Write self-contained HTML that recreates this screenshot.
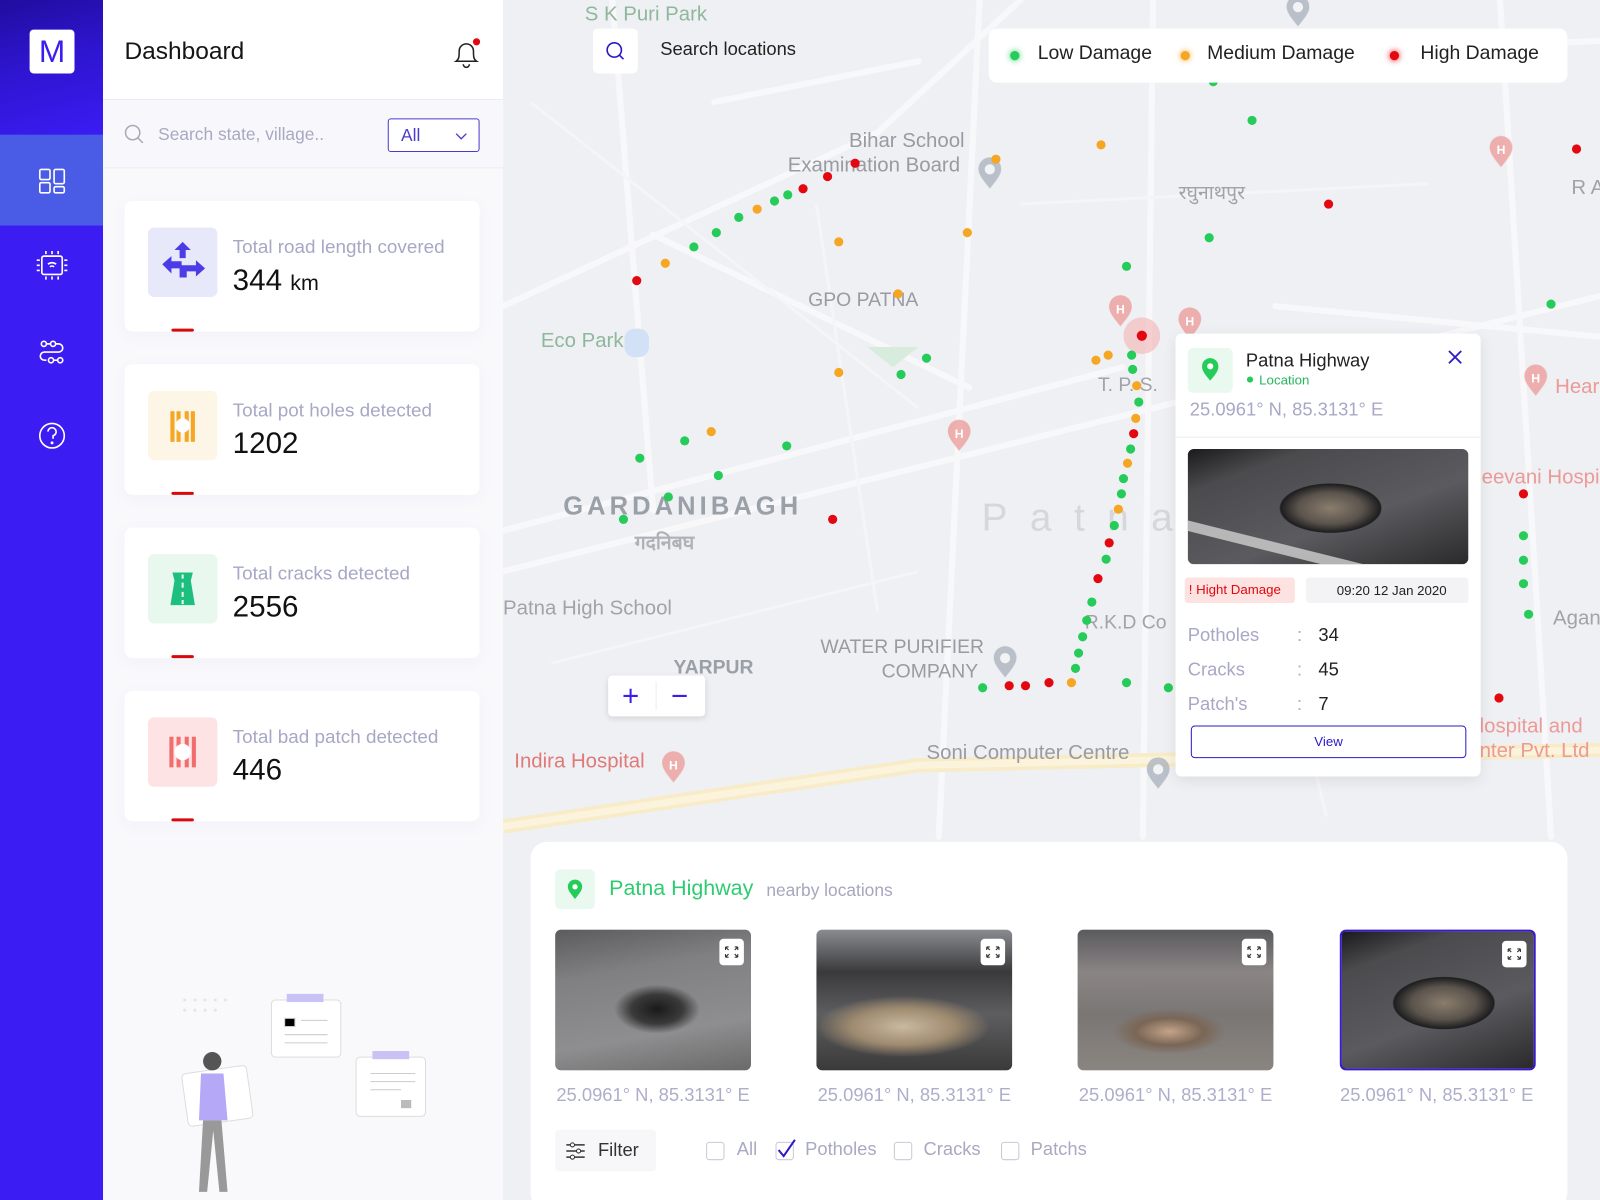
<!DOCTYPE html>
<html><head><meta charset="utf-8"><style>
*{box-sizing:border-box;margin:0;padding:0}
body{width:1600px;height:1200px;overflow:hidden;font-family:"Liberation Sans","Noto Sans CJK SC",sans-serif;background:#eff0f4}
#w{position:absolute;left:0;top:0;width:1568px;height:1176px;transform:scale(1.020408);transform-origin:0 0;overflow:hidden}
.a{position:absolute}
.side{left:0;top:0;width:101px;height:1176px;background:#3b1cf3}
.panel{left:101px;top:0;width:392px;height:1176px;background:#f9f9fc}
.card{left:21px;width:348px;height:128px;background:#fff;border-radius:8px;box-shadow:0 4px 14px rgba(120,120,180,.06)}
.ib{left:23px;top:26px;width:68px;height:68px;border-radius:6px}
.ct{left:106px;top:34px;font-size:18.5px;color:#a7a7c6;white-space:nowrap}
.cv{left:106px;top:62px;font-size:29px;color:#111}
.rb{left:46px;top:125px;width:22px;height:3px;background:#d60a0a;border-radius:2px}
.dot{display:inline-block;width:9px;height:9px;border-radius:50%}
.th{position:absolute;top:911px;width:192px;height:138px;border-radius:6px;overflow:hidden}
.ex{position:absolute;right:7px;top:9px;width:24px;height:26px;background:#fff;border-radius:4px}
.co{position:absolute;top:1063px;width:200px;text-align:center;font-size:18px;color:#aeaecb}
.cb{position:absolute;top:1119px;width:18px;height:18px;border:1.5px solid #c9c9d6;border-radius:3px}
.cl{position:absolute;top:1116px;font-size:18px;color:#a9a9c4}
</style></head><body><div id="w">

<svg width="0" height="0" style="position:absolute"><defs>
<symbol id="ex" viewBox="0 0 24 26"><path d="M6 8l3 3M6 8h3M6 8v3M18 8l-3 3M18 8h-3M18 8v3M6 18l3-3M6 18h3M6 18v-3M18 18l-3-3M18 18h-3M18 18v-3" stroke="#333" stroke-width="1.1" fill="none"/></symbol>
<symbol id="pin" viewBox="0 0 28 36"><path d="M14 34C6 24 2 19 2 13a12 12 0 0 1 24 0c0 6-4 11-12 21z"/></symbol>
</defs></svg>

<!-- MAP -->
<svg class="a" style="left:0;top:0" width="1568" height="1176" viewBox="0 0 1568 1176">
<rect width="1568" height="1176" fill="#eff0f3"/>
<g stroke="#f8f8fa" stroke-width="6" fill="none" stroke-linecap="round">
<path d="M493 560 L1568 290"/><path d="M493 520 L1100 360"/><path d="M640 230 L950 380"/>
<path d="M600 0 L640 500"/><path d="M1130 0 L1120 820"/><path d="M960 0 L920 820"/>
<path d="M1180 60 L1568 40"/><path d="M1470 0 L1520 820"/><path d="M493 300 L860 130 L1000 0"/>
<path d="M700 100 L900 60"/><path d="M1250 300 L1568 330"/>
</g>
<g stroke="#f5f5f8" stroke-width="3" fill="none">
<path d="M520 100 L900 400"/><path d="M800 200 L860 600"/><path d="M1200 400 L1300 800"/><path d="M540 650 L900 560"/><path d="M1000 200 L1400 180"/>
</g>
<path d="M493 810 L900 750 L1568 735" stroke="#f7ebc8" stroke-width="14" fill="none"/>
<path d="M493 810 L900 750 L1568 735" stroke="#fbf3dc" stroke-width="7" fill="none"/>
<path d="M850 340 L875 360 L900 340" fill="#d8ecdd"/>
<rect x="612" y="322" width="24" height="28" rx="10" fill="#d2e1f5"/>
<g font-family="Liberation Sans,sans-serif">
<text x="573" y="20" font-size="20" fill="#8fb79c">S K Puri Park</text>
<text x="530" y="340" font-size="20" fill="#8fb79c">Eco Park</text>
<text x="832" y="144" font-size="20" fill="#9a9aa2">Bihar School</text>
<text x="772" y="168" font-size="20" fill="#9a9aa2">Examination Board</text>
<text x="792" y="300" font-size="19" fill="#9a9aa2">GPO PATNA</text>
<text x="552" y="504" font-size="25" fill="#9aa0a8" font-weight="bold" letter-spacing="4">GARDANIBAGH</text>
<text x="962" y="520" font-size="38" fill="#d6d7dc" letter-spacing="22">Patna</text>
<text x="493" y="602" font-size="20" fill="#a2a2aa">Patna High School</text>
<text x="660" y="660" font-size="19" fill="#9aa0a8" font-weight="bold">YARPUR</text>
<text x="804" y="640" font-size="19" fill="#9a9aa2">WATER PURIFIER</text>
<text x="864" y="664" font-size="19" fill="#9a9aa2">COMPANY</text>
<text x="504" y="752" font-size="20" fill="#e07a78">Indira Hospital</text>
<text x="908" y="744" font-size="20" fill="#9a9aa2">Soni Computer Centre</text>
<text x="1452" y="474" font-size="20" fill="#ec9a97">eevani Hospi</text>
<text x="1450" y="718" font-size="20" fill="#ec9a97">lospital and</text>
<text x="1450" y="742" font-size="20" fill="#ec9a97">nter Pvt. Ltd</text>
<text x="1522" y="612" font-size="20" fill="#a2a2aa">Agan</text>
<text x="1524" y="385" font-size="20" fill="#ec9a97">Hear</text>
<text x="1540" y="190" font-size="20" fill="#a2a2aa">R A</text>
<text x="1063" y="616" font-size="19" fill="#a2a2aa">R.K.D Co</text>
<text x="1076" y="383" font-size="19" fill="#a2a2aa">T. P. S.</text>
<text x="1155" y="195" font-size="19" fill="#a2a2aa">रघुनाथपुर</text>
<text x="622" y="538" font-size="19" fill="#b0b0b8" font-weight="bold">गदनिबघ</text>
</g>
<g fill="#ec9a97" opacity=".75"><use href="#pin" x="1085" y="288" width="26" height="34"/><use href="#pin" x="1153" y="300" width="26" height="34"/><use href="#pin" x="927" y="410" width="26" height="34"/><use href="#pin" x="647" y="735" width="26" height="34"/><use href="#pin" x="1492" y="356" width="26" height="34"/><use href="#pin" x="1458" y="132" width="26" height="34"/></g>
<g fill="#a9b0bb" opacity=".75"><use href="#pin" x="972" y="632" width="26" height="34"/><use href="#pin" x="1122" y="741" width="26" height="34"/><use href="#pin" x="957" y="153" width="26" height="34"/><use href="#pin" x="1259" y="-6" width="26" height="34"/></g>
<g fill="#fff" font-size="12" font-weight="bold" font-family="Liberation Sans,sans-serif" text-anchor="middle"><text x="1098" y="307">H</text><text x="1166" y="319">H</text><text x="940" y="429">H</text><text x="660" y="754">H</text><text x="1505" y="375">H</text><text x="1471" y="151">H</text></g>
<g fill="#fff" opacity=".8"><circle cx="985" cy="645" r="5"/><circle cx="1135" cy="754" r="5"/><circle cx="970" cy="166" r="5"/><circle cx="1272" cy="7" r="5"/></g>
<circle cx="1119" cy="329" r="18" fill="#f3b4b4" opacity=".6"/>
<g fill="#25cc5a">
<circle cx="1189" cy="80" r="4.5"/><circle cx="1227" cy="118" r="4.5"/><circle cx="772" cy="191" r="4.5"/><circle cx="759" cy="197" r="4.5"/><circle cx="724" cy="213" r="4.5"/><circle cx="702" cy="228" r="4.5"/><circle cx="1185" cy="233" r="4.5"/><circle cx="680" cy="242" r="4.5"/><circle cx="1104" cy="261" r="4.5"/><circle cx="1520" cy="298" r="4.5"/><circle cx="1109" cy="348" r="4.5"/><circle cx="908" cy="351" r="4.5"/><circle cx="1110" cy="362" r="4.5"/><circle cx="883" cy="367" r="4.5"/><circle cx="1116" cy="394" r="4.5"/><circle cx="671" cy="432" r="4.5"/><circle cx="627" cy="449" r="4.5"/><circle cx="1108" cy="440" r="4.5"/><circle cx="771" cy="437" r="4.5"/><circle cx="1101" cy="469" r="4.5"/><circle cx="704" cy="466" r="4.5"/><circle cx="1099" cy="484" r="4.5"/><circle cx="655" cy="487" r="4.5"/><circle cx="1092" cy="515" r="4.5"/><circle cx="611" cy="509" r="4.5"/><circle cx="1084" cy="548" r="4.5"/><circle cx="1070" cy="590" r="4.5"/><circle cx="1065" cy="608" r="4.5"/><circle cx="1061" cy="624" r="4.5"/><circle cx="1057" cy="640" r="4.5"/><circle cx="1054" cy="655" r="4.5"/><circle cx="1104" cy="669" r="4.5"/><circle cx="1145" cy="674" r="4.5"/><circle cx="963" cy="674" r="4.5"/><circle cx="1493" cy="525" r="4.5"/><circle cx="1493" cy="549" r="4.5"/><circle cx="1493" cy="572" r="4.5"/><circle cx="1498" cy="602" r="4.5"/>
</g>
<g fill="#f5a623">
<circle cx="1079" cy="142" r="4.5"/><circle cx="976" cy="156" r="4.5"/><circle cx="742" cy="205" r="4.5"/><circle cx="948" cy="228" r="4.5"/><circle cx="822" cy="237" r="4.5"/><circle cx="652" cy="258" r="4.5"/><circle cx="880" cy="288" r="4.5"/><circle cx="1086" cy="348" r="4.5"/><circle cx="1074" cy="353" r="4.5"/><circle cx="1114" cy="378" r="4.5"/><circle cx="822" cy="365" r="4.5"/><circle cx="1113" cy="410" r="4.5"/><circle cx="697" cy="423" r="4.5"/><circle cx="1105" cy="454" r="4.5"/><circle cx="1096" cy="499" r="4.5"/><circle cx="1050" cy="669" r="4.5"/>
</g>
<g fill="#e3070f">
<circle cx="1545" cy="146" r="4.5"/><circle cx="838" cy="160" r="4.5"/><circle cx="811" cy="173" r="4.5"/><circle cx="787" cy="185" r="4.5"/><circle cx="1302" cy="200" r="4.5"/><circle cx="624" cy="275" r="4.5"/><circle cx="1119" cy="329" r="5"/><circle cx="1111" cy="425" r="4.5"/><circle cx="816" cy="509" r="4.5"/><circle cx="1087" cy="532" r="4.5"/><circle cx="1076" cy="567" r="4.5"/><circle cx="989" cy="672" r="4.5"/><circle cx="1005" cy="672" r="4.5"/><circle cx="1028" cy="669" r="4.5"/><circle cx="1493" cy="484" r="4.5"/><circle cx="1469" cy="684" r="4.5"/>
</g>
</svg>

<!-- map search -->
<div class="a" style="left:581px;top:28px;width:44px;height:44px;background:#fff;border-radius:5px">
<svg width="44" height="44"><circle cx="21" cy="21" r="7" fill="none" stroke="#2a1ac8" stroke-width="1.6"/><path d="M26 26 L30 30" stroke="#2a1ac8" stroke-width="1.6"/></svg></div>
<div class="a" style="left:647px;top:38px;font-size:18px;color:#222">Search locations</div>
<!-- legend -->
<div class="a" style="left:969px;top:28px;width:567px;height:53px;background:#fff;border-radius:8px;font-size:19px;color:#222">
<span class="dot a" style="left:21px;top:22px;background:#25cc5a;box-shadow:0 0 6px #25cc5a"></span><span class="a" style="left:48px;top:14px">Low Damage</span>
<span class="dot a" style="left:188px;top:22px;background:#f5a623;box-shadow:0 0 6px #f5a623"></span><span class="a" style="left:214px;top:14px">Medium Damage</span>
<span class="dot a" style="left:393px;top:22px;background:#e3070f;box-shadow:0 0 6px #e3070f"></span><span class="a" style="left:423px;top:14px">High Damage</span>
</div>
<!-- zoom ctrl -->
<div class="a" style="left:596px;top:662px;width:95px;height:40px;background:#fff;border-radius:4px;box-shadow:0 2px 6px rgba(0,0,0,.12)">
<svg width="95" height="40"><path d="M15 20h14M22 13v14M63 20h14" stroke="#3a1ef0" stroke-width="2"/><path d="M47 6v28" stroke="#eee"/></svg></div>

<!-- popup -->
<div class="a" style="left:1152px;top:327px;width:299px;height:434px;background:#fff;border-radius:6px;box-shadow:0 4px 14px rgba(0,0,0,.08)">
<div class="a" style="left:12px;top:14px;width:44px;height:44px;background:#e9f9ef;border-radius:5px"><svg width="44" height="44"><path d="M22 32c-6-7-8-10-8-14a8 8 0 0 1 16 0c0 4-2 7-8 14z" fill="#25cc5a"/><circle cx="22" cy="18" r="3" fill="#fff"/></svg></div>
<div class="a" style="left:69px;top:16px;font-size:18px;color:#222">Patna Highway</div>
<div class="a" style="left:70px;top:38px;font-size:13px;color:#25b85a"><span class="dot" style="width:6px;height:6px;background:#25cc5a;margin-right:6px;vertical-align:2px"></span>Location</div>
<div class="a" style="right:16px;top:14px"><svg width="18" height="18"><path d="M3 3L15 15M15 3L3 15" stroke="#2a1ac8" stroke-width="1.8"/></svg></div>
<div class="a" style="left:14px;top:64px;font-size:18px;color:#a8a8c6">25.0961° N, 85.3131° E</div>
<div class="a" style="left:0;top:101px;width:299px;height:1px;background:#ececf2"></div>
<div class="a" style="left:12px;top:113px;width:275px;height:113px;border-radius:6px;overflow:hidden;background:radial-gradient(ellipse 70px 34px at 140px 58px,#8a7d6c 0,#5b544d 45%,#1d1d1f 70%,transparent 72%),linear-gradient(160deg,#1a1a1c 0,#4b4b4e 20%,#5b5b5f 60%,#2a2a2c 100%)"><div class="a" style="left:0;top:70px;width:300px;height:10px;background:#cfcfcf;transform:rotate(14deg);transform-origin:0 0;opacity:.8"></div></div>
<div class="a" style="left:9px;top:239px;width:108px;height:25px;background:#fde2e2;border-radius:3px;font-size:13px;color:#e3070f;padding:4px 4px">! Hight Damage</div>
<div class="a" style="left:128px;top:239px;width:159px;height:25px;background:#f3f3f5;border-radius:3px;font-size:13px;color:#222;padding:5px 0 0 30px">09:20 12 Jan 2020</div>
<div class="a" style="left:12px;top:278px;font-size:18px;color:#a8a8c6;line-height:34px">Potholes<br>Cracks<br>Patch's</div>
<div class="a" style="left:119px;top:278px;font-size:18px;color:#a8a8c6;line-height:34px">:<br>:<br>:</div>
<div class="a" style="left:140px;top:278px;font-size:18px;color:#222;line-height:34px">34<br>45<br>7</div>
<div class="a" style="left:15px;top:384px;width:270px;height:32px;border:1.5px solid #2a1ac8;border-radius:4px;text-align:center;font-size:13px;color:#2a1ac8;line-height:29px">View</div>
</div>

<!-- bottom panel -->
<div class="a" style="left:520px;top:825px;width:1016px;height:360px;background:#fff;border-radius:16px"></div>
<div class="a" style="left:544px;top:852px;width:39px;height:39px;background:#e9f9ef;border-radius:5px"><svg width="39" height="39"><path d="M19.5 29c-5-6-7-9-7-12a7 7 0 0 1 14 0c0 3-2 6-7 12z" fill="#25cc5a"/><circle cx="19.5" cy="17" r="2.6" fill="#fff"/></svg></div>
<div class="a" style="left:597px;top:859px;font-size:21px;color:#2ecc71">Patna Highway</div>
<div class="a" style="left:751px;top:863px;font-size:17px;color:#a6a6bd">nearby locations</div>

<div class="th" style="left:544px;background:radial-gradient(ellipse 42px 24px at 100px 78px,#1a1a1a 0,#3a3a3a 60%,transparent 100%),linear-gradient(170deg,#5c5c5e 0,#808083 30%,#8e8e90 70%,#6a6a6a 100%)"><svg class="ex" viewBox="0 0 24 26"><use href="#ex"/></svg></div>
<div class="th" style="left:800px;background:radial-gradient(ellipse 85px 30px at 85px 95px,#c9b9a0 0,#9e8a6f 60%,transparent 100%),linear-gradient(180deg,#8a8c90 0,#3a3a3c 30%,#5e5e60 60%,#3a3a3a 100%)"><svg class="ex" viewBox="0 0 24 26"><use href="#ex"/></svg></div>
<div class="th" style="left:1056px;background:radial-gradient(ellipse 55px 22px at 90px 100px,#c4a48a 0,#7a6655 60%,transparent 100%),linear-gradient(180deg,#5a5a5e 0,#8a8584 30%,#7a7674 60%,#8a8580 100%)"><svg class="ex" viewBox="0 0 24 26"><use href="#ex"/></svg></div>
<div class="th" style="left:1313px;border:2px solid #3a1ac8;background:radial-gradient(ellipse 70px 36px at 100px 70px,#8a7d6c 0,#5b544d 45%,#1d1d1f 70%,transparent 72%),linear-gradient(160deg,#1a1a1c 0,#4b4b4e 20%,#5b5b5f 60%,#2a2a2c 100%)"><svg class="ex" viewBox="0 0 24 26"><use href="#ex"/></svg></div>
<div class="co" style="left:540px">25.0961° N, 85.3131° E</div>
<div class="co" style="left:796px">25.0961° N, 85.3131° E</div>
<div class="co" style="left:1052px">25.0961° N, 85.3131° E</div>
<div class="co" style="left:1308px">25.0961° N, 85.3131° E</div>

<div class="a" style="left:544px;top:1107px;width:99px;height:41px;background:#f7f7f9;border-radius:4px">
<svg class="a" style="left:10px;top:11px" width="20" height="20"><path d="M1 4h18M1 10h18M1 16h18" stroke="#333" stroke-width="1.4"/><circle cx="7" cy="4" r="2" fill="#fff" stroke="#333"/><circle cx="13" cy="10" r="2" fill="#fff" stroke="#333"/><circle cx="7" cy="16" r="2" fill="#fff" stroke="#333"/></svg>
<span class="a" style="left:42px;top:10px;font-size:18px;color:#333">Filter</span></div>
<div class="cb" style="left:692px"></div><div class="cl" style="left:722px">All</div>
<div class="cb" style="left:760px"></div><svg class="a" style="left:760px;top:1113px" width="22" height="24"><path d="M3 14l5 6L19 4" stroke="#2a1ac8" stroke-width="2" fill="none"/></svg><div class="cl" style="left:789px">Potholes</div>
<div class="cb" style="left:876px"></div><div class="cl" style="left:905px">Cracks</div>
<div class="cb" style="left:981px"></div><div class="cl" style="left:1010px">Patchs</div>

<!-- sidebar -->
<div class="a side">
<div class="a" style="left:0;top:0;width:101px;height:132px;background:linear-gradient(165deg,#200d9e 0,#2e15cf 45%,#3b1cf3 100%)"></div>
<div class="a" style="left:29px;top:29px;width:44px;height:43px;background:#fff;border-radius:4px;text-align:center;font-size:31px;line-height:43px;color:#3a1ef0">M</div>
<div class="a" style="left:0;top:132px;width:101px;height:89px;background:#4a5be6"></div>
<svg class="a" style="left:0;top:132px" width="101" height="400" fill="none" stroke="#fff" stroke-width="1.6">
<rect x="39" y="34" width="10" height="10" rx="1.5"/><rect x="53" y="34" width="10" height="14" rx="1.5"/><rect x="39" y="47" width="10" height="10" rx="1.5"/><rect x="53" y="51" width="10" height="6" rx="1.5"/>
<rect x="41" y="119" width="20" height="18" rx="2"/><path d="M39 123h-3M39 128h-3M39 133h-3M63 123h3M63 128h3M63 133h3M45 117v-3M51 117v-3M57 117v-3M45 139v3M51 139v3M57 139v3"/><path d="M47 127a6 6 0 0 1 8 0M49 129.5a3 3 0 0 1 4 0"/>
<circle cx="43" cy="205" r="2.5"/><circle cx="52" cy="205" r="2.5"/><path d="M45.5 205h4M54.5 205h3a4 4 0 0 1 0 8h-14a4 4 0 0 0 0 8h2"/><circle cx="50" cy="221" r="2.5"/><circle cx="59" cy="221" r="2.5"/><path d="M52.5 221h4"/>
<circle cx="51" cy="295" r="12"/><path d="M47 291a4 4 0 1 1 5 4v3"/><circle cx="51" cy="302" r=".6" fill="#fff"/>
</svg>
</div>

<!-- left panel -->
<div class="a panel">
<div class="a" style="left:0;top:0;width:392px;height:98px;background:#fff;border-bottom:1px solid #ececf3"></div>
<div class="a" style="left:21px;top:37px;font-size:24px;color:#151515">Dashboard</div>
<svg class="a" style="left:338px;top:34px" width="36" height="36" fill="none" stroke="#222" stroke-width="1.5"><path d="M8 26c3-2 3-5 3-10a7 7 0 0 1 14 0c0 5 0 8 3 10z"/><path d="M15 29a3 3 0 0 0 6 0"/><circle cx="28" cy="7" r="3.5" fill="#e3070f" stroke="none"/></svg>
<div class="a" style="left:0;top:98px;width:392px;height:67px;background:#f8f8fc;border-bottom:1px solid #ececf3"></div>
<svg class="a" style="left:20px;top:121px" width="22" height="22" fill="none" stroke="#a8a8bb" stroke-width="1.5"><circle cx="9" cy="9" r="7"/><path d="M14 14l5 5"/></svg>
<div class="a" style="left:54px;top:122px;font-size:17px;color:#a8a8c0">Search state, village..</div>
<div class="a" style="left:279px;top:116px;width:90px;height:33px;border:1.5px solid #4a3bd0;border-radius:3px;background:#fff;font-size:17px;color:#4a3bd0;padding:6px 0 0 12px">All<svg class="a" style="left:64px;top:10px" width="14" height="12"><path d="M2 4l5 5 5-5" stroke="#4a3bd0" fill="none" stroke-width="1.3"/></svg></div>

<div class="a card" style="top:197px"><div class="a ib" style="background:#e8e8fb"><svg width="68" height="68"><path d="M34 14l8 8h-5v8h-6v-8h-5z" fill="#4b3ce8"/><path d="M14 36l9-8v5h10v7H23v5z" fill="#4b3ce8"/><path d="M56 40l-9 8v-5H38v6h-7V37h16v-5z" fill="#4b3ce8"/></svg></div><div class="a ct">Total road length covered</div><div class="a cv">344 <span style="font-size:21px">km</span></div><div class="a rb"></div></div>
<div class="a card" style="top:357px"><div class="a ib" style="background:#fdf6e6"><svg width="68" height="68"><rect x="22" y="20" width="4" height="30" fill="#f5a623"/><rect x="28" y="20" width="4" height="30" fill="#f5a623"/><rect x="36" y="20" width="4" height="30" fill="#f5a623"/><rect x="42" y="20" width="4" height="30" fill="#f5a623"/><circle cx="34" cy="34" r="7" fill="#fff"/></svg></div><div class="a ct">Total pot holes detected</div><div class="a cv">1202</div><div class="a rb"></div></div>
<div class="a card" style="top:517px"><div class="a ib" style="background:#e8f8ee"><svg width="68" height="68"><path d="M24 18h20l-2 8 4 24H22l4-24z" fill="#1dbf7e"/><path d="M34 20v4M34 28v5M34 37v5M34 45v4" stroke="#e8f8ee" stroke-width="2"/></svg></div><div class="a ct">Total cracks detected</div><div class="a cv">2556</div><div class="a rb"></div></div>
<div class="a card" style="top:677px"><div class="a ib" style="background:#fde3e3"><svg width="68" height="68"><rect x="21" y="19" width="4" height="30" fill="#f26d6d"/><rect x="28" y="19" width="4" height="30" fill="#f26d6d"/><rect x="36" y="19" width="4" height="30" fill="#f26d6d"/><rect x="43" y="19" width="4" height="30" fill="#f26d6d"/><circle cx="34" cy="34" r="8" fill="#fff"/></svg></div><div class="a ct">Total bad patch detected</div><div class="a cv">446</div><div class="a rb"></div></div>

<!-- illustration -->
<svg class="a" style="left:60px;top:960px" width="300" height="216">
<rect x="105" y="20" width="68" height="56" rx="4" fill="#fff" stroke="#ddd"/><rect x="120" y="14" width="36" height="8" fill="#c9c3f5"/><path d="M118 38h10v8h-10zM134 40h26M118 54h42M118 62h42" stroke="#ccc"/>
<rect x="188" y="76" width="68" height="58" rx="4" fill="#fff" stroke="#ddd"/><rect x="204" y="70" width="36" height="8" fill="#c9c3f5"/><path d="M202 92h44M202 100h44M202 108h30" stroke="#ccc"/><rect x="232" y="118" width="10" height="8" fill="#bbb"/>
<g fill="#e4e4ea"><circle cx="20" cy="20" r="1.5"/><circle cx="30" cy="20" r="1.5"/><circle cx="40" cy="20" r="1.5"/><circle cx="50" cy="20" r="1.5"/><circle cx="60" cy="20" r="1.5"/><circle cx="20" cy="30" r="1.5"/><circle cx="30" cy="30" r="1.5"/><circle cx="40" cy="30" r="1.5"/><circle cx="50" cy="30" r="1.5"/></g>
<rect x="20" y="88" width="64" height="52" rx="4" fill="#fff" stroke="#ddd" transform="rotate(-8 52 114)"/>
<circle cx="47" cy="80" r="9" fill="#555"/><path d="M36 92h22l4 46H34z" fill="#b4a8f7"/><path d="M38 138l-4 70h8l6-60 6 60h8l-6-70z" fill="#999"/>
</svg>
</div>

</div></body></html>
